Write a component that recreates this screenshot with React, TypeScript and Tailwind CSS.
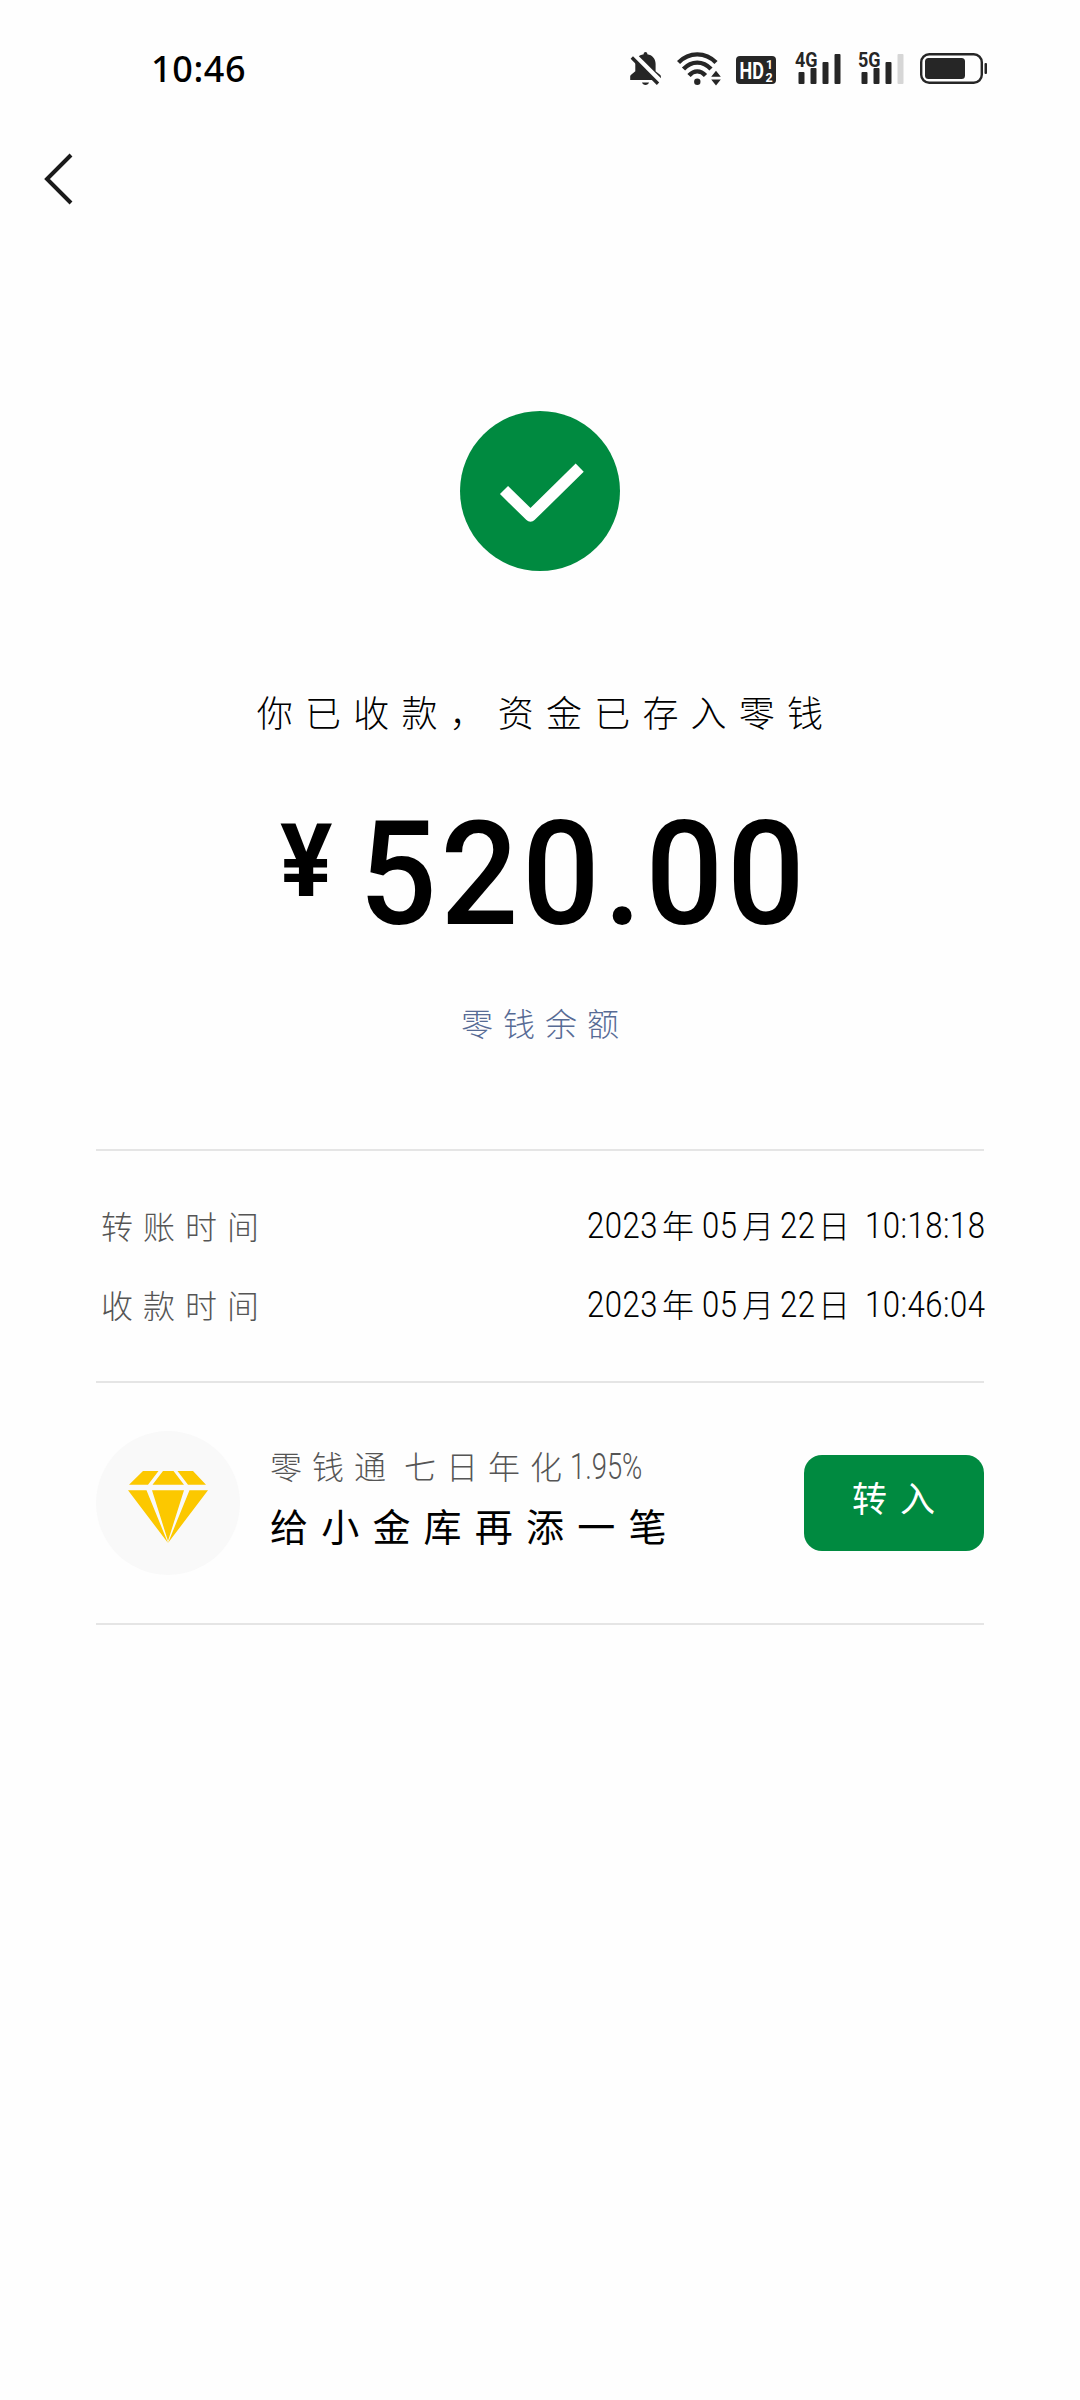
import { ReactNode } from "react";

const rows = [
  { label: "转账时间", time: "10:18:18" },
  { label: "收款时间", time: "10:46:04" },
];

function StatusBar() {
  return (
    <div className="flex h-[134px] pt-[52px] text-[#262626]">
      <span className="ml-[151px] w-[479px] font-['Noto_Sans'] text-[36px] leading-[34px] font-medium tracking-[0.6px] text-black">
        10:46
      </span>

      {/* silent */}
      <svg className="mr-[15px] h-[34px] w-[32px]" viewBox="0 0 32 34" fill="currentColor">
        <path d="M15.5 0c1 0 1.800.8 1.800 1.800v.5c5 .8 8.300 4.400 8.300 9.500v7.500l4.400 3.500c.6.500.9 1 .9 2v3.200H.2v-3.200c0-1 .3-1.500.9-2l4.200-3.500v-7.500c0-5.100 3.300-8.700 8.400-9.500v-.5c0-1 .8-1.800 1.800-1.800z" />
        <path d="M12 30.500h7c-.4 1.500-1.800 2.500-3.500 2.500s-3.100-1-3.500-2.500z" />
        <path d="M3.500 3L31 30.500" stroke="#fff" strokeWidth="6" />
        <path d="M1.800 5.500L28 31.700" stroke="currentColor" strokeWidth="3.400" />
      </svg>

      {/* wifi */}
      <svg className="mr-[15px] h-[34px] w-[44px]" viewBox="0 0 44 34" fill="none">
        <g stroke="currentColor" strokeWidth="4.400">
          <path d="M1.500 10.500C12 -.4 28.500 -.4 39 10.500" />
          <path d="M6.500 17C14.500 8.500 26 8.500 34 17" />
          <path d="M12 23.500C17 18 23.500 18 28.500 23.500" />
        </g>
        <circle cx="20.300" cy="29.700" r="3.200" fill="currentColor" />
        <path d="M39 18.800l4.800 6h-9.600zM39 33.500l4.800-6h-9.600z" fill="currentColor" />
      </svg>

      {/* hd */}
      <svg className="mr-[19px] h-[34px] w-[40px]" viewBox="0 0 40 34">
        <rect y="4" width="40" height="28" rx="4" fill="currentColor" />
        <g fill="#fff" fontFamily="Roboto" fontWeight="700">
          <text transform="translate(3.500 26.500) scale(0.78 1)" fontSize="23">HD</text>
          <text x="30" y="16.500" fontSize="12">1</text>
          <text x="29.500" y="29.500" fontSize="12.500">2</text>
        </g>
      </svg>

      <Signal label="4G" last="currentColor" />
      <Signal label="5G" last="#d6d6d6" />

      {/* battery */}
      <svg className="-ml-px h-[34px] w-[68px]" viewBox="0 0 68 34" fill="none">
        <rect x="1.200" y="2.200" width="60.600" height="28.600" rx="8" stroke="currentColor" strokeWidth="2.400" />
        <rect x="5" y="6" width="40" height="21" rx="3.500" fill="currentColor" />
        <rect x="64.500" y="11" width="2.500" height="11" rx="1" fill="currentColor" />
      </svg>
    </div>
  );
}

function Signal({ label, last }: { label: string; last: string }) {
  return (
    <svg className="mr-[17px] h-[34px] w-[46px] overflow-visible" viewBox="0 0 46 34" fill="currentColor">
      <rect x="3.500" y="20" width="6" height="12" rx="1" />
      <rect x="15.500" y="16" width="6" height="16" rx="1" />
      <rect x="27.500" y="10" width="6" height="22" rx="1" />
      <rect x="39.500" y="2" width="6" height="30" rx="1" fill={last} />
      <text
        x="0"
        y="14.800"
        fontSize="20"
        fontFamily="Roboto"
        fontWeight="700"
        textLength="22.500"
        lengthAdjust="spacingAndGlyphs"
        stroke="#fff"
        strokeWidth="2"
        paintOrder="stroke"
      >
        {label}
      </text>
    </svg>
  );
}

// tall narrow digits
function Num({ children }: { children: ReactNode }) {
  return (
    <span className="inline-block origin-left scale-x-[0.84] font-['Roboto'] text-[37px] tracking-[0.6px] whitespace-nowrap">
      {children}
    </span>
  );
}

function DateTime({ time }: { time: string }) {
  return (
    <div className="flex items-baseline text-[32px] leading-[48px] font-light text-black">
      <span className="w-[72px]">
        <Num>2023</Num>
      </span>
      <span className="w-[43px] pl-[3px]">年</span>
      <span className="w-[36px]">
        <Num>05</Num>
      </span>
      <span className="w-[42px] pl-[4px]">月</span>
      <span className="w-[36px]">
        <Num>22</Num>
      </span>
      <span className="w-[49px] pl-[2px]">日</span>
      <span className="w-[119px]">
        <Num>{time}</Num>
      </span>
    </div>
  );
}

export default function App() {
  return (
    <div className="h-[2400px] w-[1080px] overflow-hidden bg-[#fefefe] font-['Noto_Sans_CJK_SC',sans-serif] text-black">
      <StatusBar />

      <button className="ml-[42px] block h-[90px] w-[60px]" aria-label="返回">
        <svg className="h-[90px] w-[36px]" viewBox="0 0 36 90" fill="none">
          <path d="M29 21L5 45l24 24" stroke="#1a1a1a" strokeWidth="4" />
        </svg>
      </button>

      <div className="mt-[187px] flex flex-col items-center">
        <svg className="size-[160px]" viewBox="0 0 160 160" fill="none">
          <circle cx="80" cy="80" r="80" fill="#008a40" />
          <path d="M44 79l26.500 26L119.700 56.700" stroke="#fff" strokeWidth="11.500" strokeLinejoin="round" />
        </svg>

        <p className="mt-[110px] pl-[12px] text-[36px] leading-[60px] font-light tracking-[12.200px] whitespace-nowrap">
          你已收款，资金已存入零钱
        </p>

        <div className="mt-[47px] flex h-[170px] w-[520px] font-['Roboto'] font-medium">
          <span className="w-[79px] shrink-0 text-[102px] leading-[146px] font-bold">
            <span className="inline-block origin-left scale-x-[0.96]">¥</span>
          </span>
          <span className="shrink-0 origin-left scale-x-[0.95] text-[144px] leading-[174px] tracking-[4px]">
            520.00
          </span>
        </div>

        <a className="mt-[40px] pl-[10px] text-[32px] leading-[48px] font-light tracking-[10px] text-[#576b95]">
          零钱余额
        </a>
      </div>

      <div className="mx-[96px] mt-[103px]">
        <div className="flex h-[232px] flex-col border-t-2 border-[#e5e5e5] pt-[34px]">
          {rows.map((row) => (
            <div key={row.label} className="flex h-[79px] items-center justify-between">
              <span className="pl-[5px] text-[32px] leading-[48px] font-light tracking-[10px] text-[#555]">
                {row.label}
              </span>
              <DateTime time={row.time} />
            </div>
          ))}
        </div>

        <div className="flex h-[244px] items-center border-y-2 border-[#e5e5e5]">
          <div className="flex size-[144px] items-center justify-center rounded-full bg-[#f9f9f9]">
            <svg className="mt-[8px] h-[72px] w-[80px]" viewBox="0 0 80 72" fill="#fcc800">
              <path d="M15 0h15.500L20 13.700H1zM35 0h10.500L56 13.700H24.500zM49.500 0H65l13 13.700H60z" />
              <path d="M0 19.300h18.500L40 72zM24 19.300h32L40 70zM61.500 19.300H80L40 72z" />
            </svg>
          </div>

          <div className="mt-[-16px] ml-[30px] flex-1 whitespace-nowrap">
            <p className="flex h-[60px] items-baseline text-[32px] leading-[60px] font-light text-[#555]">
              <span className="w-[134px] tracking-[10px]">零钱通</span>
              <span className="w-[166px] tracking-[10px]">七日年化</span>
              <span className="inline-block origin-left scale-x-[0.74] font-['Roboto'] text-[37px]">1.95%</span>
            </p>
            <p className="h-[60px] text-[38px] leading-[60px] tracking-[13.200px]">给小金库再添一笔</p>
          </div>

          <button className="h-[96px] w-[180px] rounded-[18px] bg-[#008a40] pb-[12px] pl-[12px] text-[35px] tracking-[13px] text-white">
            转入
          </button>
        </div>
      </div>
    </div>
  );
}
